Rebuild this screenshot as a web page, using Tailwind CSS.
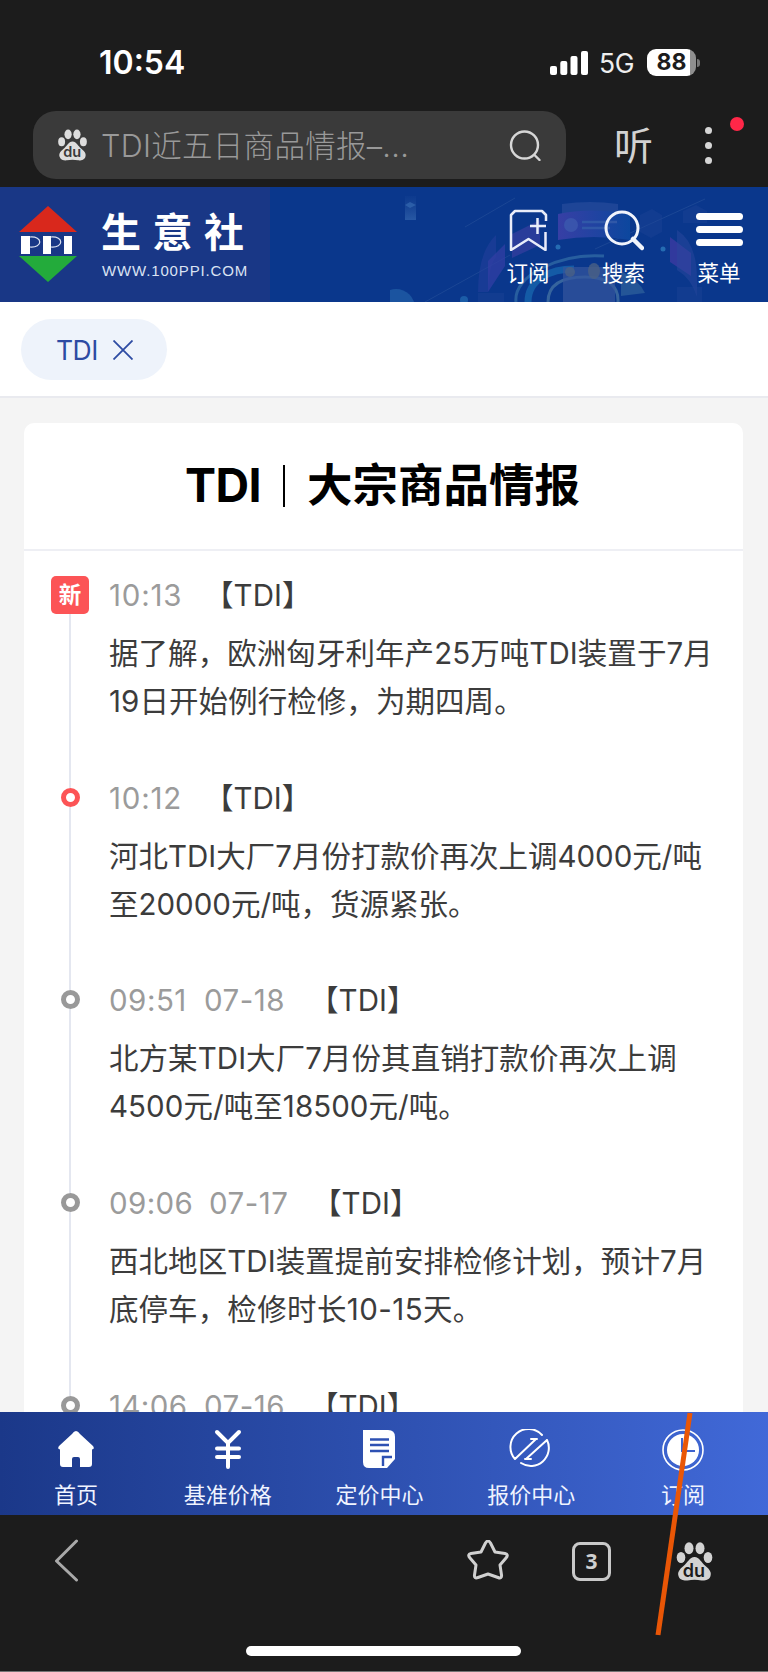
<!DOCTYPE html>
<html lang="zh-CN">
<head>
  <meta charset="UTF-8" />
  <meta name="viewport" content="width=device-width, initial-scale=1.0" />
  <title>TDI近五日商品情报</title>
  <script src="https://cdn.jsdelivr.net/npm/@tailwindcss/browser@4"></script>
</head>
<body class="relative flex h-[1672px] w-[768px] flex-col overflow-hidden bg-[#1c1c1c] font-['Inter','Noto_Sans_CJK_SC',sans-serif]">
  <!-- Status bar -->
  <div class="flex h-[111px] shrink-0 items-start justify-between pt-[46px] pr-[68px] pl-[99px] text-white">
    <div class="text-[32px] leading-[34px] font-semibold">10:54</div>
    <div class="flex h-[34px] items-center">
      <svg class="h-[25px] w-[38px]" viewBox="0 0 38 25" fill="currentColor">
        <rect x="0" y="15" width="7" height="9" rx="2" />
        <rect x="10.300" y="10" width="7" height="14" rx="2" />
        <rect x="20.500" y="5" width="7" height="19" rx="2" />
        <rect x="31" y="0" width="7" height="24" rx="2" />
      </svg>
      <span class="ml-[11px] w-[36px] text-[26.500px] leading-[34px] tracking-[-0.3px] whitespace-nowrap text-[#eeeeee]">5G</span>
      <div class="ml-[12px] flex h-[27px] w-[49px] -translate-y-px items-center justify-center rounded-[9px] bg-linear-to-r from-white from-88% to-[#8f8f8f] to-88% text-[23px] leading-none font-bold text-[#1c1c1c]">88</div>
      <div class="ml-[1px] h-[8px] w-[3px] rounded-r-full bg-[#777777]"></div>
    </div>
  </div>

  <!-- Search bar -->
  <div class="flex h-[76px] shrink-0 items-start pl-[33px]">
    <div class="flex h-[68px] w-[533px] items-center rounded-[23px] bg-[#3a3a3a] pr-[25px] pl-[25px]">
      <svg class="h-[32px] w-[29px] shrink-0" viewBox="0 0 36 39" fill="#dddddd">
        <ellipse cx="12.500" cy="6.300" rx="4.500" ry="6" />
        <ellipse cx="23.500" cy="6.300" rx="4.500" ry="6" />
        <ellipse cx="4.500" cy="15.500" rx="4.300" ry="5.600" />
        <ellipse cx="31.500" cy="15.500" rx="4.300" ry="5.600" />
        <path d="M18 15C23 15 25 21 29 24C34 28 35 31 34 34C33 38 28 39 25 38.500Q18 37 11 38.500C8 39 3 38 2 34C1 31 2 28 7 24C11 21 13 15 18 15Z" />
        <text x="17.500" y="35" text-anchor="middle" font-family="Inter" font-weight="600" font-size="18" fill="#3a3a3a">du</text>
      </svg>
      <span class="ml-[14px] flex-1 pt-px text-[30.500px] leading-[40px] font-light tracking-[0.3px] whitespace-nowrap text-[#999999]">TDI近五日商品情报–...</span>
      <svg class="h-[32px] w-[32px]" viewBox="0 0 32 32" fill="none" stroke="#d6d6d6" stroke-width="2.4" stroke-linecap="round">
        <circle cx="15.500" cy="16" r="13.500" />
        <path d="M25.500 26L30.500 31" />
      </svg>
    </div>
    <span class="ml-[48px] pt-[15px] text-[39px] leading-[40px] text-[#d2d2d2]">听</span>
    <div class="relative ml-[45px] flex w-[20px] flex-col items-center gap-[8px] pt-[16px]">
      <i class="h-[7px] w-[7px] rounded-full bg-[#d6d6d6]"></i>
      <i class="h-[7px] w-[7px] rounded-full bg-[#d6d6d6]"></i>
      <i class="h-[7px] w-[7px] rounded-full bg-[#d6d6d6]"></i>
      <i class="absolute top-[6px] left-[32px] h-[14px] w-[14px] rounded-full bg-[#ff2748]"></i>
    </div>
  </div>

  <!-- Site header -->
  <header class="relative flex h-[115px] shrink-0 items-start overflow-hidden bg-[#0a378c] text-white">
    <!-- faint artwork behind the buttons -->
    <svg class="absolute top-0 left-[390px] h-[115px] w-[378px]" viewBox="0 0 378 115" fill="none">
      <defs>
        <linearGradient id="panel" x1="0" x2="1">
          <stop offset="0" stop-color="#373fa5" />
          <stop offset="1" stop-color="#0c479e" />
        </linearGradient>
        <linearGradient id="beam" x1="0" x2="0" y1="0" y2="1">
          <stop offset="0" stop-color="#2654a0" stop-opacity=".1" />
          <stop offset="1" stop-color="#2f60aa" stop-opacity=".8" />
        </linearGradient>
      </defs>
      <rect x="15" y="9" width="11" height="24" fill="url(#beam)" />
      <path d="M15 18l5-3 6 3-6 3z" fill="#3b70b5" opacity=".6" />
      <circle cx="6" cy="121" r="19" fill="#2667ae" opacity=".6" />
      <path d="M75 40L125 11M35 115L120 68M205 62L315 12" stroke="#2b559d" opacity=".5" />
      <path d="M172 17Q200 13 228 17V46H172z" fill="#274b9b" opacity=".7" />
      <path d="M168 27Q200 20 240 27V53Q204 47 168 53z" fill="url(#panel)" />
      <circle cx="181" cy="38" r="7" fill="#3954ac" />
      <path d="M192 35h35M192 41h28" stroke="#3058a8" stroke-width="2.500" />
      <path d="M122 47L150 33V58L122 71z" fill="#3f3fa3" opacity=".6" />
      <path d="M88 105Q88 65 106 48V70Q99 78 98 105z" fill="#263f9d" opacity=".5" />
      <path d="M98 74L115 57V79L98 105z" fill="#333fa5" opacity=".7" />
      <path d="M280 50L301 66V89L280 75z" fill="#413ba4" opacity=".7" />
      <path d="M287 43Q307 56 307 92V110Q301 91 287 83z" fill="#2a489e" opacity=".5" />
      <path d="M126 115C123 88 170 66 214 69" stroke="#2e68a4" stroke-width="3" opacity=".8" />
      <path d="M138 115C138 92 161 82 184 82" stroke="#1764ac" stroke-width="7" opacity=".8" />
      <path d="M158 115C158 96 174 90 195 90S229 98 228 115" stroke="#416fa1" stroke-width="3" opacity=".8" />
      <path d="M231 84Q249 93 255 106L231 109Z" fill="#2a5d9a" opacity=".8" />
      <path d="M173 80H225V115H173z" fill="#35559c" opacity=".7" />
      <ellipse cx="204" cy="84" rx="6" ry="8" fill="#4a6084" opacity=".8" />
      <ellipse cx="180" cy="85" rx="5" ry="5" fill="#4a6084" opacity=".8" />
      <circle cx="168" cy="60" r="2.500" fill="#256cb2" />
      <circle cx="273" cy="62" r="2.500" fill="#256cb2" />
      <circle cx="74" cy="113" r="4" fill="#1f65ae" opacity=".8" />
      <path d="M250 28l12-6 10 6v17l-11 6-11-6zM293 24l13-6 11 6v12H293zM88 106h26v9H88zM287 100h25v15h-25z" fill="#1d4396" opacity=".4" />
    </svg>
    <div class="flex h-[115px] w-[270px] items-start bg-[#193786] pt-[18px] pl-[18px]">
      <svg class="h-[80px] w-[60px]" viewBox="0 0 60 80">
        <path d="M30 1L59 27H1z" fill="#d9281c" />
        <path d="M1 51H59L30 77z" fill="#23ab3b" />
        <path d="M3 31H12V49H3zM25 31H33V49H25zM46 31H54V49H46z" fill="#fff" />
        <path d="M12 32C25 31 25 43 12 42M33 32C46 31 46 43 33 42" fill="none" stroke="#dce2f1" stroke-width="1.2" />
      </svg>
      <div class="ml-[23px] flex flex-col">
        <span class="h-[52px] pt-[2px] text-[40px] leading-[52px] font-bold tracking-[11.500px] whitespace-nowrap">生意社</span>
        <span class="mt-[4px] ml-[1px] font-['Liberation_Sans'] text-[15px] leading-[20px] tracking-[0.850px] whitespace-nowrap text-[#dbe3f3]">WWW.100PPI.COM</span>
      </div>
    </div>
    <div class="relative ml-auto flex gap-[51.500px] pt-[21px] pr-[27px] text-[21.500px] leading-[26px]">
      <div class="flex w-[44px] flex-col items-center">
        <svg class="h-[43px] w-[40px]" viewBox="0 0 40 43" fill="none" stroke="#e9edfa" stroke-width="2.500">
          <path d="M38 13V7L34 3H7L3 7V42L20.500 31L37.500 42V24" stroke-linejoin="round" />
          <path d="M29.500 10V26M22 18H38" />
        </svg>
        <span class="mt-[9px] whitespace-nowrap">订阅</span>
      </div>
      <div class="flex w-[44px] flex-col items-center">
        <svg class="h-[43px] w-[40px]" viewBox="0 0 40 43" fill="none" stroke="#f1f4fc" stroke-width="3">
          <circle cx="18" cy="20" r="16" />
          <path d="M29 31L38 40" stroke-width="4.500" stroke-linecap="round" />
        </svg>
        <span class="mt-[9px] whitespace-nowrap">搜索</span>
      </div>
      <div class="flex w-[44px] flex-col items-center">
        <div class="flex h-[43px] w-[47px] flex-col gap-[6px] pt-[5px]">
          <i class="h-[7px] rounded-full bg-white"></i>
          <i class="h-[7px] rounded-full bg-white"></i>
          <i class="h-[7px] rounded-full bg-white"></i>
        </div>
        <span class="mt-[9px] whitespace-nowrap">菜单</span>
      </div>
    </div>
  </header>

  <!-- Keyword filter -->
  <div class="flex h-[96px] shrink-0 items-start border-b-2 border-[#e9eaef] bg-white pt-[17px] pl-[21px]">
    <div class="flex h-[61px] w-[146px] items-center rounded-full bg-[#eef3fb] pl-[35px] text-[#2d4ba3]">
      <span class="w-[57px] text-[26.500px] leading-[34px] tracking-[-0.5px]">TDI</span>
      <svg class="h-[20px] w-[20px]" viewBox="0 0 20 20" fill="none" stroke="currentColor" stroke-width="1.800"><path d="M.5.5L19.500 19.500M19.500.5L.5 19.500" /></svg>
    </div>
  </div>

  <!-- News list -->
  <main class="h-[1014px] shrink-0 overflow-hidden bg-[#f4f4f4] px-[24px] pt-[25px]">
    <section class="h-[1100px] w-[719px] rounded-t-[10px] bg-white">
      <h1 class="flex h-[128px] items-center border-b-2 border-[#eeeff4] pb-[1px] pl-[161px] text-[45.500px] leading-none font-bold whitespace-nowrap text-black">
        <span class="w-[76px] text-[46.500px] tracking-[-0.5px]">TDI</span>
        <i class="mx-[22px] h-[42px] w-[2px] bg-black"></i>
        <span>大宗商品情报</span>
      </h1>
      <div class="pt-[20px] pl-[27px]">
        <article class="flex h-[202.700px]">
          <div class="flex w-[38px] flex-col items-center">
            <b class="mt-[5px] flex h-[38px] w-[38px] shrink-0 items-center justify-center rounded-[5px] bg-[#fc5456] text-[22.500px] leading-none text-white">新</b>
            <i class="w-[2px] flex-1 bg-[#e4e7f0]"></i>
          </div>
          <div class="ml-[20px] text-[29.500px] leading-[48px] tracking-[0.060px] whitespace-nowrap text-[#3c3c3c]">
            <div class="flex h-[58px]"><time class="w-[95px] tracking-[0.8px] text-[#9b9b9b]">10:13</time><span>【TDI】</span></div>
            <p>据了解，欧洲匈牙利年产25万吨TDI装置于7月<br />19日开始例行检修，为期四周。</p>
          </div>
        </article>
        <article class="flex h-[202.700px]">
          <div class="flex w-[38px] flex-col items-center">
            <i class="h-[14px] w-[2px] bg-[#e4e7f0]"></i>
            <i class="h-[19px] w-[19px] shrink-0 rounded-full border-[5.500px] border-[#fc5456] bg-white"></i>
            <i class="w-[2px] flex-1 bg-[#e4e7f0]"></i>
          </div>
          <div class="ml-[20px] text-[29.500px] leading-[48px] whitespace-nowrap text-[#3c3c3c]">
            <div class="flex h-[58px]"><time class="w-[95px] tracking-[0.8px] text-[#9b9b9b]">10:12</time><span>【TDI】</span></div>
            <p>河北TDI大厂7月份打款价再次上调4000元/吨<br />至20000元/吨，货源紧张。</p>
          </div>
        </article>
        <article class="flex h-[202.700px]">
          <div class="flex w-[38px] flex-col items-center">
            <i class="h-[14px] w-[2px] bg-[#e4e7f0]"></i>
            <i class="h-[19px] w-[19px] shrink-0 rounded-full border-[5.500px] border-[#999999] bg-white"></i>
            <i class="w-[2px] flex-1 bg-[#e4e7f0]"></i>
          </div>
          <div class="ml-[20px] text-[29.500px] leading-[48px] tracking-[0.060px] whitespace-nowrap text-[#3c3c3c]">
            <div class="flex h-[58px]"><time class="w-[95px] tracking-[0.5px] text-[#9b9b9b]">09:51</time><time class="w-[105px] tracking-[0.5px] text-[#9b9b9b]">07-18</time><span>【TDI】</span></div>
            <p>北方某TDI大厂7月份其直销打款价再次上调<br />4500元/吨至18500元/吨。</p>
          </div>
        </article>
        <article class="flex h-[202.700px]">
          <div class="flex w-[38px] flex-col items-center">
            <i class="h-[14px] w-[2px] bg-[#e4e7f0]"></i>
            <i class="h-[19px] w-[19px] shrink-0 rounded-full border-[5.500px] border-[#999999] bg-white"></i>
            <i class="w-[2px] flex-1 bg-[#e4e7f0]"></i>
          </div>
          <div class="ml-[20px] text-[29.500px] leading-[48px] tracking-[0.060px] whitespace-nowrap text-[#3c3c3c]">
            <div class="flex h-[58px]"><time class="w-[100px] tracking-[0.4px] text-[#9b9b9b]">09:06</time><time class="w-[103px] tracking-[0.5px] text-[#9b9b9b]">07-17</time><span>【TDI】</span></div>
            <p>西北地区TDI装置提前安排检修计划，预计7月<br />底停车，<span class="tracking-[0.4px]">检修时长10-15天。</span></p>
          </div>
        </article>
        <article class="flex h-[202.700px]">
          <div class="flex w-[38px] flex-col items-center">
            <i class="h-[14px] w-[2px] bg-[#e4e7f0]"></i>
            <i class="h-[19px] w-[19px] shrink-0 rounded-full border-[5.500px] border-[#999999] bg-white"></i>
          </div>
          <div class="ml-[20px] text-[29.500px] leading-[48px] whitespace-nowrap text-[#3c3c3c]">
            <div class="flex h-[58px]"><time class="w-[95px] tracking-[0.4px] text-[#9b9b9b]">14:06</time><time class="w-[105px] tracking-[0.5px] text-[#9b9b9b]">07-16</time><span>【TDI】</span></div>
          </div>
        </article>
      </div>
    </section>
  </main>

  <!-- Site navigation -->
  <nav class="grid h-[103px] shrink-0 grid-cols-5 bg-linear-to-r from-[#1b3889] to-[#4169d8] pr-[9px] text-[22px] leading-[28px] text-[#f0f4ff]">
    <div class="flex flex-col items-center pt-[17px]">
      <svg class="h-[44px] w-[44px]" viewBox="0 0 44 44" fill="#fff"><path d="M22 2Q24 2 26 5L39 17Q41 20 38 20.500V35Q38 38 35 38H26V30Q26 28 24 28H20Q18 28 18 30V38H9Q6 38 6 35V20.500Q3 20 5 17L18 5Q20 2 22 2Z" /></svg>
      <span class="mt-[8px]">首页</span>
    </div>
    <div class="flex flex-col items-center pt-[17px]">
      <svg class="h-[44px] w-[44px]" viewBox="0 0 44 44" fill="none" stroke="#fff" stroke-width="4" stroke-linecap="round"><path d="M11 3L22 14L33 3M11 19.500H33M11 28H33M22 14V38" /></svg>
      <span class="mt-[8px]">基准价格</span>
    </div>
    <div class="flex flex-col items-center pt-[17px]">
      <svg class="h-[44px] w-[44px]" viewBox="0 0 44 44" fill="#fff">
        <path d="M6 1H31Q38 1 38 8V30L30 39H12Q6 39 6 33Z" />
        <path d="M13 10.500H32M13 16H32M13 22H32M26 37V28H35" fill="none" stroke="#2e51b3" stroke-width="2.400" />
      </svg>
      <span class="mt-[8px]">定价中心</span>
    </div>
    <div class="flex flex-col items-center pt-[17px]">
      <svg class="h-[44px] w-[44px]" viewBox="0 0 44 44" fill="none" stroke="#fff" stroke-width="2">
        <path d="M33 6A18 18 0 0 0 6 30L27 10H22M38 11L17 30H22M38 11A18 18 0 0 1 12 34M23 10H28M16 30H22" stroke-linejoin="round" stroke-linecap="round" />
      </svg>
      <span class="mt-[8px]">报价中心</span>
    </div>
    <div class="flex flex-col items-center pt-[17px]">
      <svg class="h-[44px] w-[44px]" viewBox="0 0 44 44" fill="none">
        <circle cx="22" cy="21" r="20" stroke="#fff" stroke-width="1.600" />
        <circle cx="22" cy="21" r="16" fill="#fff" />
        <path d="M21 9V22H34" stroke="#3e63ce" stroke-width="2" />
      </svg>
      <span class="mt-[8px]">订阅</span>
    </div>
  </nav>

  <!-- Browser toolbar -->
  <footer class="flex h-[157px] shrink-0 flex-col border-b border-[#747474]">
    <div class="flex h-[92px] items-center pr-[55px] pl-[54px]">
      <svg class="h-[44px] w-[26px]" viewBox="0 0 26 44" fill="none" stroke="#a9a9a9" stroke-width="3" stroke-linecap="round"><path d="M22.500 2L2.500 22L22.500 41" stroke-linejoin="round" /></svg>
      <svg class="ml-auto h-[42px] w-[42px]" viewBox="0 0 42 42" fill="none" stroke="#d0d0d0" stroke-width="3" stroke-linejoin="round"><path d="M18.500 3Q21 -1 23.500 3L28 12L38 13.500Q42 14.500 39 18L33 25L34.500 35Q35 39 31 37.500L21 34L11 37.500Q7 39 7.500 35L9 25L3 18Q0 14.500 4 13.500L14 12Z" /></svg>
      <div class="ml-[63px] flex h-[39px] w-[39px] items-center justify-center rounded-[8px] border-[3px] border-[#c9c9c9] font-['Noto_Sans'] text-[21px] leading-none font-bold text-[#d0d0d0]">3</div>
      <svg class="ml-[65px] h-[39px] w-[37px]" viewBox="0 0 36 39" fill="#d2d2d2">
        <ellipse cx="12.500" cy="6.300" rx="4.500" ry="6" />
        <ellipse cx="23.500" cy="6.300" rx="4.500" ry="6" />
        <ellipse cx="4.500" cy="15.500" rx="4.300" ry="5.600" />
        <ellipse cx="31.500" cy="15.500" rx="4.300" ry="5.600" />
        <path d="M18 15C23 15 25 21 29 24C34 28 35 31 34 34C33 38 28 39 25 38.500Q18 37 11 38.500C8 39 3 38 2 34C1 31 2 28 7 24C11 21 13 15 18 15Z" />
        <text x="17.500" y="35" text-anchor="middle" font-family="Inter" font-weight="600" font-size="18" fill="#1c1c1c">du</text>
      </svg>
    </div>
    <div class="mt-[39px] ml-[246px] h-[10px] w-[275px] rounded-full bg-white"></div>
  </footer>

  <!-- Pen stroke over the page -->
  <svg class="pointer-events-none absolute top-[1412px] left-[650px] h-[226px] w-[48px]" viewBox="0 0 48 226"><path d="M40 1L8 223" stroke="#e95606" stroke-width="5" /></svg>
</body>
</html>
